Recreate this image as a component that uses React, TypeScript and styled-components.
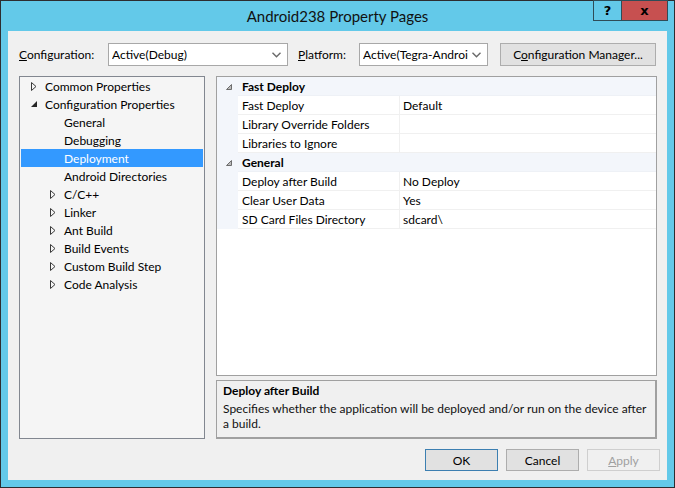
import React from "react";
import styled, { createGlobalStyle } from "styled-components";

const GlobalStyle = createGlobalStyle`
  html, body { margin: 0; padding: 0; background: #ffffff; }
  body { font-family: "Segoe UI", Lato, "Noto Sans", sans-serif; font-size: 12px; color: #000; }
  * { box-sizing: border-box; }
`;

const FONT = `"Segoe UI", Lato, "Noto Sans", sans-serif`;

const Window = styled.div`
  width: 675px;
  height: 488px;
  border: 1px solid #2d2d30;
  background: #63c9e9;
  display: flex;
  flex-direction: column;
  font-family: ${FONT};
`;

const TitleBar = styled.div`
  height: 30px;
  display: grid;
  grid-template-columns: 1fr auto 1fr;
  align-items: start;
`;

const Title = styled.div`
  grid-column: 2;
  font-size: 15px;
  line-height: 30px;
  color: #111;
`;

const CaptionButtons = styled.div`
  grid-column: 3;
  justify-self: end;
  display: flex;
  margin-right: 6px;
  margin-top: -1px;
`;

const CaptionButton = styled.div<{ $close?: boolean; $w: number }>`
  width: ${(p) => p.$w}px;
  height: 21px;
  border: 1px solid #2f4c57;
  margin-left: -1px;
  background: ${(p) => (p.$close ? "#c75050" : "transparent")};
  display: flex;
  align-items: center;
  justify-content: center;
  font-family: "DejaVu Sans", sans-serif;
  font-weight: bold;
  font-size: 13px;
  color: #000;
`;

const Client = styled.div`
  flex: 1;
  margin: 0 7px 7px 7px;
  background: #f0f0f0;
  display: flex;
  flex-direction: column;
`;

const ConfigRow = styled.div`
  display: flex;
  align-items: center;
  height: 23px;
  margin-top: 12px;
  padding-left: 11px;
`;

const Label = styled.div<{ $w: number; $gap?: number }>`
  width: ${(p) => p.$w}px;
  margin-left: ${(p) => p.$gap ?? 0}px;
  flex: none;
`;

const Select = styled.div<{ $w: number }>`
  width: ${(p) => p.$w}px;
  height: 23px;
  flex: none;
  border: 1px solid #a8a8a8;
  background: #fff;
  display: flex;
  align-items: center;
  padding: 0 6px 0 3px;
  gap: 4px;
`;

const SelectText = styled.span`
  flex: 1;
  overflow: hidden;
  white-space: nowrap;
`;

const Button = styled.div<{
  $w: number;
  $h: number;
  $gap?: number;
  $variant?: "default" | "disabled";
}>`
  width: ${(p) => p.$w}px;
  height: ${(p) => p.$h}px;
  margin-left: ${(p) => p.$gap ?? 0}px;
  flex: none;
  display: flex;
  align-items: center;
  justify-content: center;
  background: ${(p) => (p.$variant === "disabled" ? "#f0f0f0" : "#e1e1e1")};
  border: 1px solid
    ${(p) =>
      p.$variant === "default" ? "#3c7fb1" : p.$variant === "disabled" ? "#cfcfcf" : "#adadad"};
  color: ${(p) => (p.$variant === "disabled" ? "#a0a0a0" : "#000")};
`;

const Main = styled.div`
  display: flex;
  gap: 11px;
  margin-top: 10px;
  padding: 0 10px 0 11px;
`;

const Tree = styled.div`
  width: 186px;
  height: 363px;
  border: 1px solid #828790;
  background: #f5f5f5;
  padding: 0 1px 1px 1px;
`;

const TreeRow = styled.div<{ $level: number; $selected?: boolean }>`
  height: 18px;
  display: flex;
  align-items: center;
  padding-left: ${(p) => 10 + p.$level * 19}px;
  background: ${(p) => (p.$selected ? "#3399ff" : "transparent")};
  color: ${(p) => (p.$selected ? "#fff" : "#000")};
  white-space: nowrap;
`;

const Expander = styled.span`
  width: 14px;
  flex: none;
  display: flex;
  align-items: center;
`;

const RightCol = styled.div`
  width: 441px;
  display: flex;
  flex-direction: column;
  gap: 4px;
`;

const Grid = styled.div`
  height: 300px;
  border: 1px solid #a0a0a0;
  background: #fff;
  display: grid;
  grid-template-columns: 21px 162px 1fr;
  grid-auto-rows: 19px;
  align-content: start;
`;

const Gutter = styled.div`
  background: #f3f6fb;
  display: flex;
  align-items: center;
  padding-left: 9px;
`;

const CategoryCell = styled.div`
  grid-column: 2 / 4;
  background: #f3f6fb;
  font-weight: bold;
  display: flex;
  align-items: center;
  padding-left: 4px;
  border-bottom: 1px solid #eef1f6;
`;

const Cell = styled.div<{ $name?: boolean }>`
  display: flex;
  align-items: center;
  padding-left: ${(p) => (p.$name ? 4 : 3)}px;
  border-bottom: 1px solid #f0f0f0;
  border-right: ${(p) => (p.$name ? "1px solid #f0f0f0" : "none")};
  white-space: nowrap;
  overflow: hidden;
`;

const Description = styled.div`
  height: 59px;
  border: 1px solid #a0a0a0;
  border-bottom-width: 2px;
  border-right-width: 2px;
  background: #f0f0f0;
  padding: 2px 6px 0 6px;
  line-height: 15px;
`;

const DescTitle = styled.div`
  font-weight: bold;
  margin-bottom: 3px;
`;

const DescText = styled.div`
  color: #111;
`;

const ButtonRow = styled.div`
  display: flex;
  justify-content: flex-end;
  gap: 8px;
  margin-top: 10px;
  padding-right: 7px;
`;

const Chevron = () => (
  <svg width="9" height="6" viewBox="0 0 9 6">
    <path d="M0.5 0.8 L4.5 4.8 L8.5 0.8" fill="none" stroke="#6a6a6a" strokeWidth="1.4" />
  </svg>
);

const Collapsed = () => (
  <svg width="6" height="9" viewBox="0 0 6 9">
    <path d="M0.5 0.5 L5 4.5 L0.5 8.5 Z" fill="none" stroke="#3a3a3a" strokeWidth="1" />
  </svg>
);

const Expanded = () => (
  <svg width="6" height="6" viewBox="0 0 6 6">
    <path d="M6 0 L6 6 L0 6 Z" fill="#262626" />
  </svg>
);

const CatArrow = () => (
  <svg width="6" height="6" viewBox="0 0 6 6">
    <path d="M5.5 0.5 L5.5 5.5 L0.5 5.5 Z" fill="#bdbdbd" stroke="#6d6d6d" strokeWidth="1" />
  </svg>
);

type TreeItem = { label: string; level: number; expander?: "open" | "closed"; selected?: boolean };

const treeItems: TreeItem[] = [
  { label: "Common Properties", level: 0, expander: "closed" },
  { label: "Configuration Properties", level: 0, expander: "open" },
  { label: "General", level: 1 },
  { label: "Debugging", level: 1 },
  { label: "Deployment", level: 1, selected: true },
  { label: "Android Directories", level: 1 },
  { label: "C/C++", level: 1, expander: "closed" },
  { label: "Linker", level: 1, expander: "closed" },
  { label: "Ant Build", level: 1, expander: "closed" },
  { label: "Build Events", level: 1, expander: "closed" },
  { label: "Custom Build Step", level: 1, expander: "closed" },
  { label: "Code Analysis", level: 1, expander: "closed" },
];

type Section = { title: string; rows: [string, string][] };

const sections: Section[] = [
  {
    title: "Fast Deploy",
    rows: [
      ["Fast Deploy", "Default"],
      ["Library Override Folders", ""],
      ["Libraries to Ignore", ""],
    ],
  },
  {
    title: "General",
    rows: [
      ["Deploy after Build", "No Deploy"],
      ["Clear User Data", "Yes"],
      ["SD Card Files Directory", "sdcard\\"],
    ],
  },
];

export default function App() {
  return (
    <>
      <GlobalStyle />
      <Window>
        <TitleBar>
          <Title>Android238 Property Pages</Title>
          <CaptionButtons>
            <CaptionButton $w={29}>?</CaptionButton>
            <CaptionButton $w={47} $close>
              x
            </CaptionButton>
          </CaptionButtons>
        </TitleBar>
        <Client>
          <ConfigRow>
            <Label $w={89}>
              <u>C</u>onfiguration:
            </Label>
            <Select $w={180}>
              <SelectText>Active(Debug)</SelectText>
              <Chevron />
            </Select>
            <Label $w={61} $gap={10}>
              <u>P</u>latform:
            </Label>
            <Select $w={129}>
              <SelectText>Active(Tegra-Android)</SelectText>
              <Chevron />
            </Select>
            <Button $w={156} $h={23} $gap={12}>
              <span>
                C<u>o</u>nfiguration Manager...
              </span>
            </Button>
          </ConfigRow>
          <Main>
            <Tree>
              {treeItems.map((t) => (
                <TreeRow key={t.label} $level={t.level} $selected={t.selected}>
                  <Expander>
                    {t.expander === "closed" && <Collapsed />}
                    {t.expander === "open" && <Expanded />}
                  </Expander>
                  {t.label}
                </TreeRow>
              ))}
            </Tree>
            <RightCol>
              <Grid>
                {sections.map((s) => (
                  <React.Fragment key={s.title}>
                    <Gutter>
                      <CatArrow />
                    </Gutter>
                    <CategoryCell>{s.title}</CategoryCell>
                    {s.rows.map(([n, v]) => (
                      <React.Fragment key={n}>
                        <Gutter />
                        <Cell $name>{n}</Cell>
                        <Cell>{v}</Cell>
                      </React.Fragment>
                    ))}
                  </React.Fragment>
                ))}
              </Grid>
              <Description>
                <DescTitle>Deploy after Build</DescTitle>
                <DescText>
                  Specifies whether the application will be deployed and/or run on the device after a
                  build.
                </DescText>
              </Description>
            </RightCol>
          </Main>
          <ButtonRow>
            <Button $w={73} $h={22} $variant="default">
              OK
            </Button>
            <Button $w={73} $h={22}>
              Cancel
            </Button>
            <Button $w={73} $h={22} $variant="disabled">
              <span>
                <u>A</u>pply
              </span>
            </Button>
          </ButtonRow>
        </Client>
      </Window>
    </>
  );
}
